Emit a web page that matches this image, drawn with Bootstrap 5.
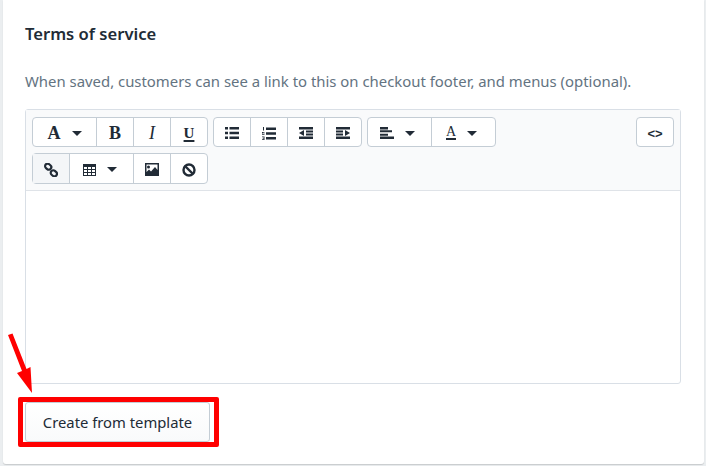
<!DOCTYPE html>
<html lang="en">
<head>
  <meta charset="UTF-8">
  <title>Terms of service</title>
  <meta name="viewport" content="width=device-width, initial-scale=1">
  <link href="https://cdn.jsdelivr.net/npm/bootstrap@5.3.0/dist/css/bootstrap.min.css" rel="stylesheet">
  <style>
    html, body { height: 466px; overflow: hidden; }
    body { background: #ebeef0; font-family: "Noto Sans", "Open Sans", sans-serif; color: #212b36; }
    .policy-card { width: 701px; height: 464px; margin-left: 3px; background: #fff; border-radius: 0 0 3px 3px; padding: 22px 22px 0; box-shadow: 0 1px 1px rgba(63,63,68,.2); position: relative; }
    .policy-title { font-size: 16.6px; font-weight: 600; line-height: 24px; margin: 0; }
    .policy-help { font-size: 14.9px; line-height: 20px; color: #637381; margin: 25px 0 0; white-space: nowrap; }
    .editor-box { width: 656px; height: 275px; margin-top: 18px; border: 1px solid #d9dfe6; border-radius: 3px; }
    .editor-bar { background: #f9fafb; border-bottom: 1px solid #dfe3e8; height: 81px; padding: 7px 6px 0; }
    .bar-line { height: 30px; margin-bottom: 6px; }
    .tool-group { display: flex; height: 30px; border: 1px solid #c4cdd5; border-radius: 4px; background: #fff; }
    .tool-group.tall-group { height: 31px; }
    .tool-group.next-group { margin-left: 5px; }
    .tool-group.last-group { margin-left: 5px; }
    .tool-btn { display: flex; align-items: center; justify-content: center; gap: 11px; width: 37px; height: 100%; padding-top: 2px; border-left: 1px solid #c4cdd5; color: #212b36; font: bold 18px/1 "Liberation Serif", serif; }
    .tool-btn:first-child { border-left: 0; width: 36px; }
    .tool-btn.wide { width: 64px; }
    .tool-btn.wide:first-child { width: 63px; }
    .tool-btn.wide.with-icon { padding-right: 4px; }
    .tool-btn.is-on { background: #f4f6f8; }
    .tool-btn i { font-style: italic; font-weight: normal; }
    .tool-btn u { font-size: 15px; text-decoration-thickness: 2px; text-underline-offset: 2px; }
    .tool-btn .under-a { font-size: 14px; font-weight: normal; line-height: 12px; border-bottom: 2px solid #212b36; }
    .tool-code { width: 38px; font: bold 13px/1 "Liberation Sans", sans-serif; }
    .tool-code.tool-btn:first-child { width: 36px; }
    .caret-down { width: 0; height: 0; border: 5px solid transparent; border-top: 5px solid #212b36; border-bottom: 0; }
    .template-btn { width: 185px; height: 40px; margin-top: 18px; padding: 0; font-size: 14.8px; color: #212b36; background: linear-gradient(#fff, #f9fafb); border: 1px solid #c4cdd5; border-radius: 3px; box-shadow: 0 1px 0 rgba(22,29,37,.05); }
    .mark-box { position: absolute; left: 15px; top: 397px; width: 201px; height: 50px; border: 5px solid #f00; border-radius: 2px; pointer-events: none; }
    .mark-arrow { position: absolute; left: -3px; top: 328px; }
  </style>
</head>
<body>

  <div class="policy-card">
    <h2 class="policy-title">Terms of service</h2>
    <p class="policy-help">When saved, customers can see a link to this on checkout footer, and menus (optional).</p>

    <div class="editor-box">
      <div class="editor-bar">
        <!-- first row of tools -->
        <div class="bar-line d-flex">
          <div class="tool-group">
            <span class="tool-btn wide">A<span class="caret-down"></span></span>
            <span class="tool-btn">B</span>
            <span class="tool-btn"><i>I</i></span>
            <span class="tool-btn"><u>U</u></span>
          </div>
          <div class="tool-group next-group">
            <span class="tool-btn"><svg width="14" height="12" viewBox="0 0 14 12"><path fill="#212b36" d="M0 0h3v2.500H0zM4.500 0H14v2.500H4.500zM0 4.700h3v2.500H0zM4.500 4.700H14v2.500H4.500zM0 9.500h3V12H0zM4.500 9.500H14V12H4.500z"/></svg></span>
            <span class="tool-btn"><svg width="14" height="13" viewBox="0 0 14 13"><path fill="#212b36" d="M4 .5h10V3H4zM4 5.200h10v2.500H4zM4 10h10v2.500H4zM1 0h1v3.500H1zM0 5h2.500v.8H1v.7h1.500v1.300H0v-.8h1.500V6.500H0zM0 9.500h2.500V13H0v-.7h1.600v-.7H.6v-.6h1v-.7H0z"/></svg></span>
            <span class="tool-btn"><svg width="14" height="12" viewBox="0 0 14 12"><path fill="#212b36" d="M0 0h14v2.500H0zM7 3.500h7v2H7zM7 6.500h7v2H7zM0 9.500h14V12H0zM5 3v6L0 6z"/></svg></span>
            <span class="tool-btn"><svg width="14" height="12" viewBox="0 0 14 12"><path fill="#212b36" d="M0 0h14v2.500H0zM0 3.500h7v2H0zM0 6.500h7v2H0zM0 9.500h14V12H0zM9 3v6l5-3z"/></svg></span>
          </div>
          <div class="tool-group last-group">
            <span class="tool-btn wide with-icon"><svg width="14" height="12" viewBox="0 0 14 12"><path fill="#212b36" d="M0 0h8v2.500H0zM0 3.300h12v2H0zM0 6.700h8v2H0zM0 9.500h14V12H0z"/></svg><span class="caret-down"></span></span>
            <span class="tool-btn wide with-icon"><span class="under-a">A</span><span class="caret-down"></span></span>
          </div>
          <div class="tool-group ms-auto">
            <span class="tool-btn tool-code">&lt;&gt;</span>
          </div>
        </div>
        <!-- second row of tools -->
        <div class="bar-line d-flex">
          <div class="tool-group tall-group">
            <span class="tool-btn is-on"><svg width="14" height="14" viewBox="0 0 14 14" fill="none" stroke="#212b36" stroke-width="2.200"><rect x="1" y="1" width="6.500" height="5" rx="2.500" transform="rotate(40 4 3.500)"/><rect x="6.500" y="8" width="6.500" height="5" rx="2.500" transform="rotate(40 10 10.500)"/></svg></span>
            <span class="tool-btn wide with-icon"><svg width="13" height="12" viewBox="0 0 13 12"><path fill="#212b36" fill-rule="evenodd" d="M0 0h13v12H0zM1 3v2h3V3zM5 3v2h3V3zM9 3v2h3V3zM1 6v2h3V6zM5 6v2h3V6zM9 6v2h3V6zM1 9v2h3V9zM5 9v2h3V9zM9 9v2h3V9z"/></svg><span class="caret-down"></span></span>
            <span class="tool-btn"><svg width="14" height="13" viewBox="0 0 14 13"><path fill="#212b36" fill-rule="evenodd" d="M0 0h14v13H0zM1.500 1.500v7.500l2.500-2.500 2 2 4-4.500 2.500 3V1.500zM3.500 2.500a1.500 1.500 0 1 1 0 3 1.500 1.500 0 0 1 0-3z"/></svg></span>
            <span class="tool-btn"><svg width="14" height="14" viewBox="0 0 14 14" fill="none" stroke="#212b36" stroke-width="2.400"><circle cx="7" cy="7" r="5.500"/><path d="M3 3l8 8"/></svg></span>
          </div>
        </div>
      </div>
    </div>

    <button type="button" class="btn template-btn d-block">Create from template</button>

    <div class="mark-box"></div>
    <svg class="mark-arrow" width="40" height="70" viewBox="0 0 40 70"><path fill="#f00" d="M8 7 12.500 5.500 26.500 41 30.500 39 32 65 17 45 22 43z"/></svg>
  </div>

</body>
</html>
